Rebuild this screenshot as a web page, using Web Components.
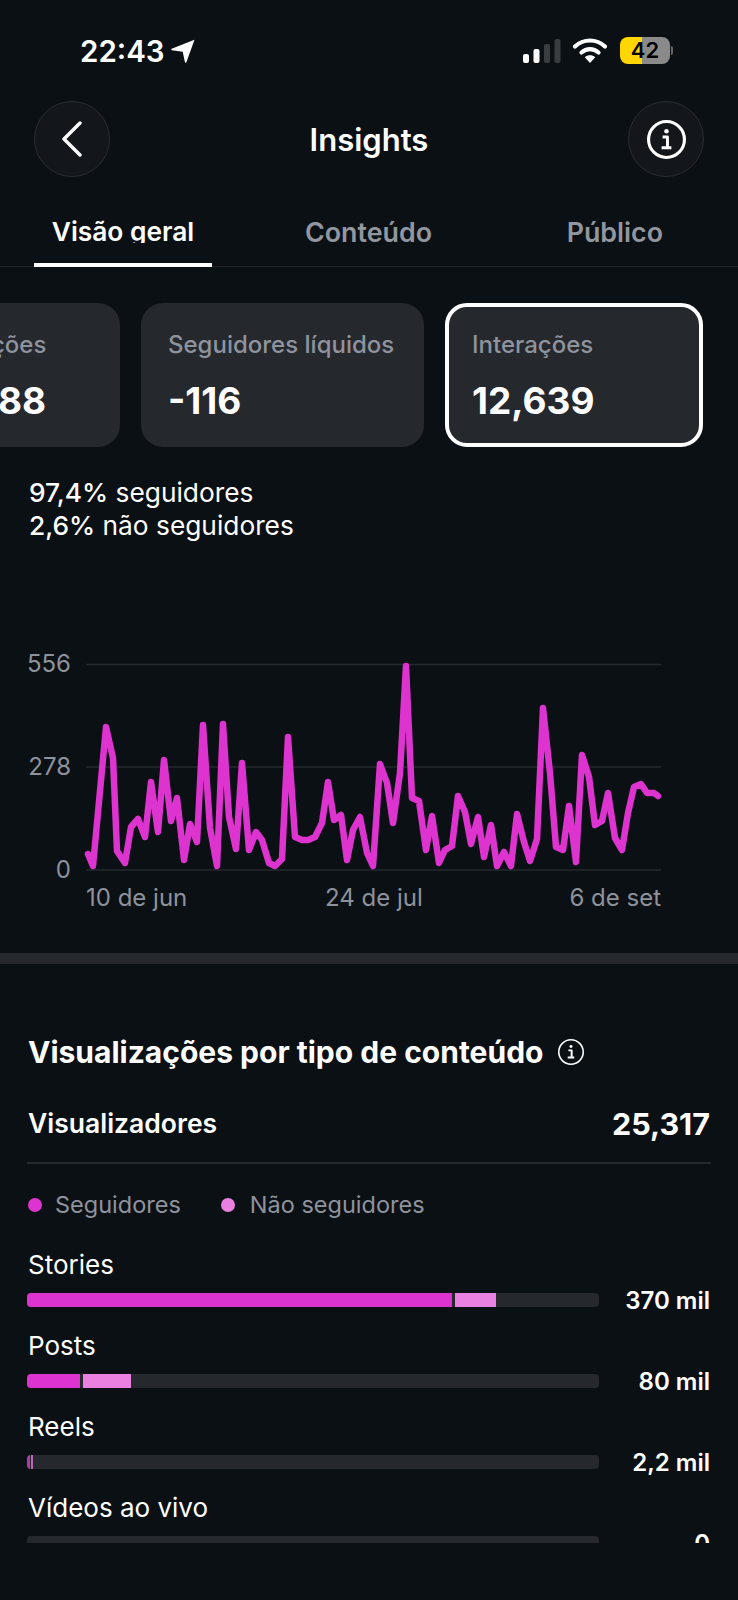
<!DOCTYPE html>
<html lang="pt">
<head>
<meta charset="utf-8">
<title>Insights</title>
<style>
  html, body { margin: 0; background: #0b1014; }
  body { width: 738px; height: 1600px; overflow: hidden; font-family: Inter, "Liberation Sans", sans-serif; color: #fff; }
</style>
</head>
<body>
<status-bar></status-bar>
<top-bar></top-bar>
<tab-bar></tab-bar>
<metric-row>
  <metric-card class="cut" label="ções" value="88"></metric-card>
  <metric-card class="plain" label="Seguidores líquidos" value="-116"></metric-card>
  <metric-card class="active" label="Interações" value="12,639"></metric-card>
</metric-row>
<follower-split></follower-split>
<line-chart></line-chart>
<views-section>
  <bar-row label="Stories" value="370 mil" a="425" b="41"></bar-row>
  <bar-row label="Posts" value="80 mil" a="53" b="48"></bar-row>
  <bar-row label="Reels" value="2,2 mil" a="3" b="2" thin></bar-row>
  <bar-row label="Vídeos ao vivo" value="0" a="0" b="0"></bar-row>
</views-section>

<script>
class StatusBar extends HTMLElement{
    constructor(){
        super();
        this.attachShadow({mode: 'open'});
    }
    connectedCallback(){
        this.shadowRoot.innerHTML = `
        <style>
        :host{ display:flex; align-items:center; height:101px; box-sizing:border-box; padding:0 65px 0 80px; }
        .left{ display:flex; align-items:center; gap:6px; font-size:29.500px; font-weight:600; }
        .right{ margin-left:auto; display:flex; align-items:center; }
        svg{ display:block; }
        .batt{ display:flex; align-items:center; margin-left:13px; }
        .cell{ width:50px; height:27px; border-radius:8px; overflow:hidden;
            background:linear-gradient(90deg,#ffd600 0 43%,#8a8a8a 43%);
            color:#000; font-size:22px; font-weight:600; line-height:27px; text-align:center; }
        .nub{ width:2px; height:9px; margin-left:1px; border-radius:0 3px 3px 0; background:#666; }
        </style>
        <div class="left">
            <span>22:43</span>
            <svg width="24" height="24" viewBox="0 0 24 24"><path d="M23.500 .8 15.400 23.200c-.3.8-1.300.7-1.500-.1L11.700 12.800 .9 11.300C.1 11.200 0 10.100 .7 9.800Z" fill="#fff"/></svg>
        </div>
        <div class="right">
            <svg width="38" height="24" viewBox="0 0 38 24">
                <rect x="0" y="15" width="6" height="9" rx="2" fill="#fff"/>
                <rect x="10.500" y="10" width="6" height="14" rx="2" fill="#fff"/>
                <rect x="21" y="5" width="6" height="19" rx="2" fill="#3a3d40"/>
                <rect x="31.500" y="0" width="6" height="24" rx="2" fill="#3a3d40"/>
            </svg>
            <svg style="margin-left:12px" width="34" height="25" viewBox="0 0 34 25">
                <path d="M2 8.500C10.500 .5 23.500 .5 32 8.500" fill="none" stroke="#fff" stroke-width="4.200" stroke-linecap="round"/>
                <path d="M8.500 14.500C13.500 10 20.500 10 25.500 14.500" fill="none" stroke="#fff" stroke-width="4.200" stroke-linecap="round"/>
                <path d="M17 25 11.800 19.300C14.800 16.700 19.200 16.700 22.200 19.300Z" fill="#fff"/>
            </svg>
            <div class="batt"><div class="cell">42</div><div class="nub"></div></div>
        </div>
        `;
    }
}

class TopBar extends HTMLElement{
    constructor(){
        super();
        this.attachShadow({mode: 'open'});
    }
    connectedCallback(){
        this.shadowRoot.innerHTML = `
        <style>
        :host{ display:flex; align-items:center; justify-content:space-between; height:76px; padding:0 34px; }
        .round{ width:76px; height:76px; box-sizing:border-box; border-radius:50%; border:1.500px solid #2a2e32; background:#13171b;
            display:flex; align-items:center; justify-content:center; }
        h1{ margin:0; font-size:31px; font-weight:600; }
        </style>
        <div class="round">
            <svg width="24" height="36" viewBox="0 0 24 36" style="margin-right:1px"><path d="M20 2 4 18 20 34" fill="none" stroke="#fff" stroke-width="3.400" stroke-linecap="round" stroke-linejoin="round"/></svg>
        </div>
        <h1>Insights</h1>
        <div class="round">
            <info-icon size="39" weight="3.200"></info-icon>
        </div>
        `;
    }
}

class InfoIcon extends HTMLElement{
    constructor(){
        super();
        this.attachShadow({mode: 'open'});
    }
    connectedCallback(){
        const size = this.getAttribute('size') || 26;
        const weight = this.getAttribute('weight') || 2;
        this.shadowRoot.innerHTML = `
        <style>:host{ display:inline-flex; } svg{ display:block; }</style>
        <svg width="${size}" height="${size}" viewBox="0 0 40 40">
            <circle cx="20" cy="20" r="${20 - weight / 2}" fill="none" stroke="#fff" stroke-width="${weight}"/>
            <circle cx="20" cy="11.500" r="2.300" fill="#fff"/>
            <path d="M16 17.500h5V27.500M15 28.500h10" fill="none" stroke="#fff" stroke-width="3" stroke-linejoin="round"/>
        </svg>
        `;
    }
}

class TabBar extends HTMLElement{
    constructor(){
        super();
        this.attachShadow({mode: 'open'});
    }
    connectedCallback(){
        this.shadowRoot.innerHTML = `
        <style>
        :host{ display:grid; grid-template-columns:178px 1fr 1fr; height:90px; box-sizing:border-box; padding:0 34px;
            border-bottom:1px solid #1e2226; margin-bottom:36px; font-size:26.800px; font-weight:600; }
        .tab{ display:flex; justify-content:center; height:90px; padding-top:36px; box-sizing:border-box; color:#92969f; }
        .tab span{ line-height:38px; }
        .on{ color:#fff; border-bottom:4px solid #fff; font-size:26.300px; }
        .on span{ height:30px; overflow:hidden; }
        .c2{ justify-content:flex-start; margin-left:93px; }
        .c3{ justify-content:flex-end; margin-right:41px; }
        </style>
        <div class="tab on"><span>Visão geral</span></div>
        <div class="tab c2"><span>Conteúdo</span></div>
        <div class="tab c3"><span>Público</span></div>
        `;
    }
}

class MetricRow extends HTMLElement{
    constructor(){
        super();
        this.attachShadow({mode: 'open'}).innerHTML = `
        <style>
        :host{ display:flex; gap:21px; height:144px; overflow:hidden; }
        </style>
        <slot></slot>
        `;
    }
}

class MetricCard extends HTMLElement{
    constructor(){
        super();
        this.attachShadow({mode: 'open'});
    }
    connectedCallback(){
        this.shadowRoot.innerHTML = `
        <style>
        :host{ display:block; box-sizing:border-box; flex:none; height:144px; background:#25282d; border-radius:22px; padding:28px 0 0 27px; overflow:hidden; }
        :host(.cut){ width:120px; padding-left:0; border-radius:0 22px 22px 0; }
        :host(.plain){ width:283px; }
        :host(.active){ width:258px; border:4px solid #fff; padding:24px 0 0 23px; }
        .l{ font-size:24px; font-weight:500; line-height:28px; color:#8f939d; white-space:nowrap; }
        .v{ margin-top:20px; font-size:37px; font-weight:700; line-height:44px; }
        :host(.cut) .l{ margin-left:-9px; }
        :host(.cut) .v{ margin-left:-2px; }
        </style>
        <div class="l">${this.getAttribute('label')}</div>
        <div class="v">${this.getAttribute('value')}</div>
        `;
    }
}

class FollowerSplit extends HTMLElement{
    constructor(){
        super();
        this.attachShadow({mode: 'open'});
    }
    connectedCallback(){
        this.shadowRoot.innerHTML = `
        <style>
        :host{ display:block; padding:29px 0 0 29px; font-size:26.300px; line-height:33px; }
        b{ font-weight:500; }
        </style>
        <div><b>97,4%</b> seguidores</div>
        <div><b>2,6%</b> não seguidores</div>
        `;
    }
}

class LineChart extends HTMLElement{
    constructor(){
        super();
        this.attachShadow({mode: 'open'});
    }
    connectedCallback(){
        // pontos lidos da curva, um por dia
        const pts = [[88,854],[93,866],[106,727],[113,758],[117,851],[125,863],[131,827],[138,819],[145,837],[151,782],[158,832],[164,760],[171,821],[177,798],[184,860],[190,824],[197,842],[203,725],[210,828],[217,866],[223,724],[229,817],[236,849],[242,763],[249,850],[256,832],[262,840],[269,863],[275,866],[282,859],[288,737],[295,837],[302,840],[308,840],[315,837],[322,823],[328,782],[334,820],[341,815],[347,860],[353,830],[360,817],[367,853],[373,866],[380,764],[387,783],[393,823],[400,773],[406,666],[412,798],[419,801],[426,850],[432,816],[439,863],[445,850],[452,846],[458,796],[465,812],[471,844],[478,817],[484,857],[491,825],[497,866],[504,852],[511,866],[517,814],[524,842],[530,861],[537,839],[543,708],[550,773],[556,847],[563,850],[569,806],[576,862],[582,755],[589,777],[595,825],[602,821],[608,793],[615,838],[622,850],[628,813],[634,787],[641,784],[647,793],[654,793],[658,796]];
        this.shadowRoot.innerHTML = `
        <style>
        :host{ display:grid; grid-template-columns:86px 575px; margin-top:122px; height:280px; }
        .y{ display:flex; flex-direction:column; justify-content:space-between; height:236px; margin-top:-15px; align-items:flex-end; padding-right:15px; box-sizing:border-box; }
        .y span, .x span{ font-size:24px; line-height:30px; color:#8e929b; }
        svg{ display:block; overflow:visible; }
        .x{ display:flex; justify-content:space-between; margin-top:12px; }
        .x span:nth-child(2){ margin-right:9px; }
        </style>
        <div class="y"><span>556</span><span>278</span><span>0</span></div>
        <div>
            <svg width="575" height="207" viewBox="86 664 575 207">
                <path d="M86 664.500H661M86 767H661M86 870H661" stroke="#25292d" stroke-width="1.500" fill="none"/>
                <polyline points="${pts.join(' ')}" fill="none" stroke="#dd33cf" stroke-width="6.500" stroke-linejoin="round" stroke-linecap="round"/>
            </svg>
            <div class="x"><span>10 de jun</span><span>24 de jul</span><span>6 de set</span></div>
        </div>
        `;
    }
}

class ViewsSection extends HTMLElement{
    constructor(){
        super();
        this.attachShadow({mode: 'open'});
    }
    connectedCallback(){
        this.shadowRoot.innerHTML = `
        <style>
        :host{ display:block; border-top:11px solid #25282d; padding:70px 27px 0 27px; height:568px; box-sizing:border-box; margin-top:9px; }
        h2{ margin:0 0 0 1px; display:flex; align-items:center; gap:15px; font-size:30px; font-weight:700; line-height:36px; height:36px; white-space:nowrap; }
        .total{ display:flex; justify-content:space-between; align-items:center; height:38px; margin-top:34px; padding:0 1px; font-size:26.500px; font-weight:600; }
        .total b{ font-size:30.500px; font-weight:700; }
        hr{ border:0; height:1.500px; background:#25292d; margin:20px 0 0; }
        .legend{ display:flex; align-items:center; height:30px; margin-top:26px; font-size:23.500px; color:#8f939d; }
        .dot{ width:14px; height:14px; border-radius:50%; margin:0 13px 0 1px; }
        .gap{ margin:0 15px 0 40px; }
        .list{ height:296.500px; margin-top:27px; overflow:hidden; }
        </style>
        <h2>Visualizações por tipo de conteúdo <info-icon size="26" weight="2.400"></info-icon></h2>
        <div class="total"><span>Visualizadores</span><b>25,317</b></div>
        <hr>
        <div class="legend">
            <span class="dot" style="background:#dd33cf"></span><span>Seguidores</span>
            <span class="dot gap" style="background:#ea80e0"></span><span>Não seguidores</span>
        </div>
        <div class="list"><slot></slot></div>
        `;
    }
}

class BarRow extends HTMLElement{
    constructor(){
        super();
        this.attachShadow({mode: 'open'});
    }
    connectedCallback(){
        const a = this.getAttribute('a');
        const b = this.getAttribute('b');
        const thin = this.hasAttribute('thin');
        this.shadowRoot.innerHTML = `
        <style>
        :host{ display:block; height:81px; }
        .l{ padding-left:1px; font-size:26px; line-height:36px; height:36px; }
        .r{ display:flex; align-items:center; height:36px; }
        .track{ flex:none; width:572px; height:14px; margin-top:-1px; border-radius:4px; background:#25282d; overflow:hidden; display:flex; }
        .a{ background:${thin ? '#b03aa6' : '#dd33cf'}; }
        .b{ background:${thin ? '#c065b8' : '#ea80e0'}; margin-left:${a > 0 ? (thin ? 1 : 3) : 0}px; }
        .v{ margin-left:auto; padding-right:1px; font-size:24px; font-weight:600; }
        </style>
        <div class="l">${this.getAttribute('label')}</div>
        <div class="r">
            <div class="track"><div class="a" style="width:${a}px"></div><div class="b" style="width:${b}px"></div></div>
            <div class="v">${this.getAttribute('value')}</div>
        </div>
        `;
    }
}

customElements.define('info-icon', InfoIcon);
customElements.define('status-bar', StatusBar);
customElements.define('top-bar', TopBar);
customElements.define('tab-bar', TabBar);
customElements.define('metric-row', MetricRow);
customElements.define('metric-card', MetricCard);
customElements.define('follower-split', FollowerSplit);
customElements.define('line-chart', LineChart);
customElements.define('views-section', ViewsSection);
customElements.define('bar-row', BarRow);
</script>
</body>
</html>
